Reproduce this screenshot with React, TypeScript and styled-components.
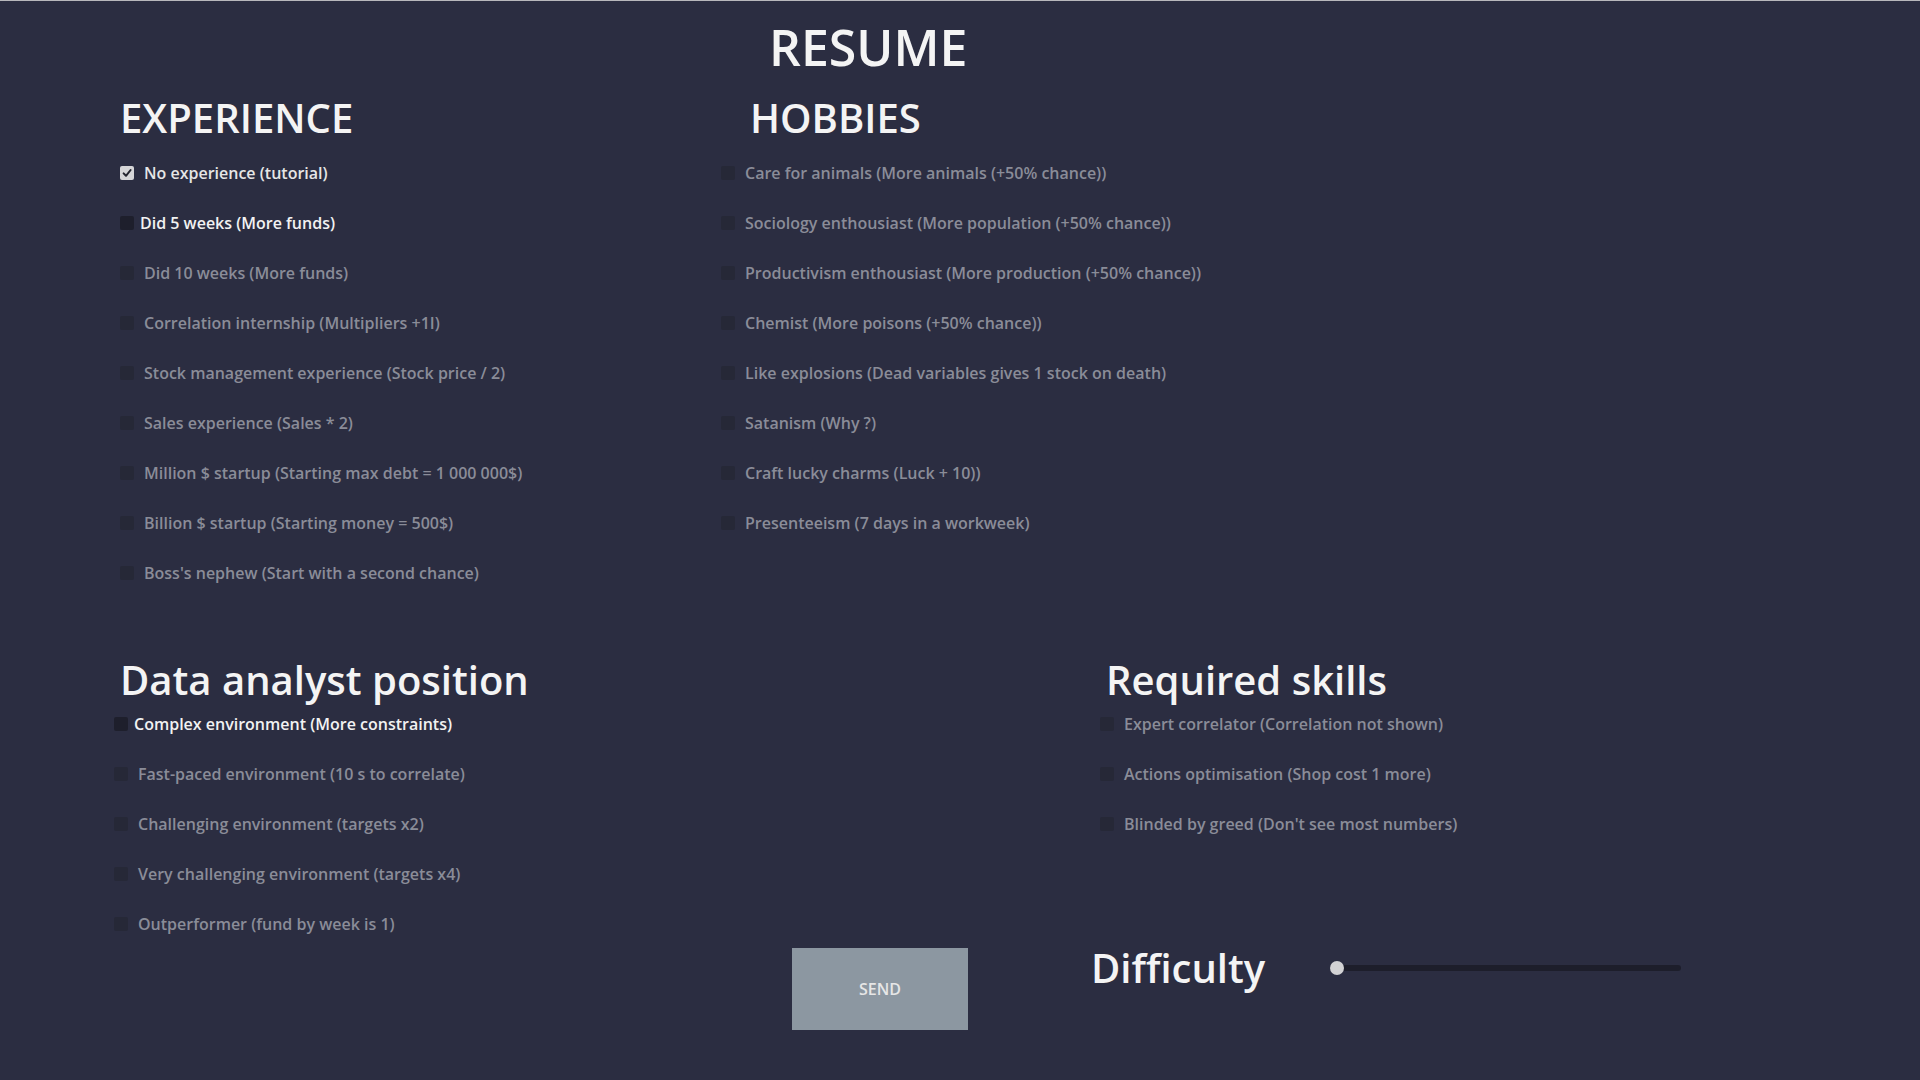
import React from "react";
import styled, { createGlobalStyle } from "styled-components";

type CheckState = "checked" | "hover" | "disabled";

const GlobalStyle = createGlobalStyle`
  html, body {
    margin: 0;
    padding: 0;
    background: #2b2d41;
  }
  * {
    box-sizing: border-box;
  }
`;

const Screen = styled.div`
  width: 1920px;
  height: 1080px;
  overflow: hidden;
  background: #2b2d41;
  border-top: 1px solid #b8b8bc;
  font-family: "Open Sans", "Noto Sans", sans-serif;
  font-weight: 600;
  color: #e0e0e0;
  display: flex;
  flex-direction: column;
`;

const Header = styled.header`
  padding: 12px 0 0 769px;
`;

const Title = styled.h1`
  margin: 0;
  font-size: 50px;
  line-height: 68px;
  font-weight: 600;
  color: #f4f4f4;
`;

const Section = styled.section<{ $left: number; $first: number; $top: number }>`
  display: grid;
  grid-template-columns: ${(p) => p.$first}px 1fr;
  padding-left: ${(p) => p.$left}px;
  margin-top: ${(p) => p.$top}px;
`;

const Column = styled.div`
  display: flex;
  flex-direction: column;
`;

const Heading = styled.h2<{ $indent: number }>`
  margin: 0 0 0 ${(p) => p.$indent}px;
  font-size: 40px;
  line-height: 44px;
  font-weight: 600;
  color: #f4f4f4;
  white-space: nowrap;
`;

const List = styled.div<{ $top: number }>`
  display: flex;
  flex-direction: column;
  gap: 10px;
  margin-top: ${(p) => p.$top}px;
`;

const Row = styled.label<{ $state: CheckState }>`
  display: flex;
  align-items: center;
  height: 40px;
  gap: ${(p) => (p.$state === "hover" ? 6 : 10)}px;
  font-size: 16px;
  white-space: nowrap;
  color: ${(p) =>
    p.$state === "disabled" ? "#8a8c98" : p.$state === "hover" ? "#f2f2f2" : "#e6e6e6"};
`;

const Box = styled.span<{ $state: CheckState }>`
  width: 14px;
  height: 14px;
  flex: none;
  border-radius: 2px;
  display: flex;
  align-items: center;
  justify-content: center;
  background: ${(p) =>
    p.$state === "checked" ? "#d6d6d8" : p.$state === "hover" ? "#1e1f2c" : "#262837"};
`;

const Footer = styled.footer`
  display: flex;
  align-items: flex-start;
  padding-left: 792px;
  margin-top: 2px;
`;

const SendButton = styled.button`
  margin-top: 2px;
  width: 176px;
  height: 82px;
  border: none;
  border-radius: 0;
  background: #8c97a1;
  color: #e6e6e6;
  font-family: inherit;
  font-weight: 600;
  font-size: 16px;
`;

const DifficultyGroup = styled.div`
  display: flex;
  align-items: center;
  height: 44px;
  margin-left: 123px;
`;

const DifficultyLabel = styled.span`
  width: 239px;
  font-size: 40px;
  line-height: 44px;
  color: #f4f4f4;
`;

const Track = styled.div`
  position: relative;
  width: 351px;
  height: 6px;
  border-radius: 3px;
  background: #1d1e2b;
`;

const Grabber = styled.span`
  position: absolute;
  left: 0;
  top: 50%;
  width: 14px;
  height: 14px;
  margin-top: -7px;
  border-radius: 50%;
  background: #d2d2d4;
`;

const CheckMark = () => (
  <svg width="12" height="12" viewBox="0 0 12 12">
    <path
      d="M2.6 6.4 L5 8.8 L9.6 3"
      fill="none"
      stroke="#23242e"
      strokeWidth="2"
      strokeLinecap="round"
      strokeLinejoin="round"
    />
  </svg>
);

type Item = { label: string; state: CheckState };

const CheckRow = ({ label, state }: Item) => (
  <Row $state={state}>
    <Box $state={state}>{state === "checked" && <CheckMark />}</Box>
    {label}
  </Row>
);

const off = (label: string): Item => ({ label, state: "disabled" });

const experience: Item[] = [
  { label: "No experience (tutorial)", state: "checked" },
  { label: "Did 5 weeks (More funds)", state: "hover" },
  off("Did 10 weeks (More funds)"),
  off("Correlation internship (Multipliers +1I)"),
  off("Stock management experience (Stock price / 2)"),
  off("Sales experience (Sales * 2)"),
  off("Million $ startup (Starting max debt = 1 000 000$)"),
  off("Billion $ startup (Starting money = 500$)"),
  off("Boss's nephew (Start with a second chance)"),
];

const hobbies: Item[] = [
  off("Care for animals (More animals (+50% chance))"),
  off("Sociology enthousiast (More population (+50% chance))"),
  off("Productivism enthousiast (More production (+50% chance))"),
  off("Chemist (More poisons (+50% chance))"),
  off("Like explosions (Dead variables gives 1 stock on death)"),
  off("Satanism (Why ?)"),
  off("Craft lucky charms (Luck + 10))"),
  off("Presenteeism (7 days in a workweek)"),
];

const position: Item[] = [
  { label: "Complex environment (More constraints)", state: "hover" },
  off("Fast-paced environment (10 s to correlate)"),
  off("Challenging environment (targets x2)"),
  off("Very challenging environment (targets x4)"),
  off("Outperformer (fund by week is 1)"),
];

const skills: Item[] = [
  off("Expert correlator (Correlation not shown)"),
  off("Actions optimisation (Shop cost 1 more)"),
  off("Blinded by greed (Don't see most numbers)"),
];

const Group = ({
  title,
  indent,
  listTop,
  items,
}: {
  title: string;
  indent: number;
  listTop: number;
  items: Item[];
}) => (
  <Column>
    <Heading $indent={indent}>{title}</Heading>
    <List $top={listTop}>
      {items.map((it) => (
        <CheckRow key={it.label} {...it} />
      ))}
    </List>
  </Column>
);

export default function App() {
  return (
    <>
      <GlobalStyle />
      <Screen>
        <Header>
          <Title>RESUME</Title>
        </Header>
        <Section $left={120} $first={601} $top={15}>
          <Group title="EXPERIENCE" indent={0} listTop={13} items={experience} />
          <Group title="HOBBIES" indent={29} listTop={13} items={hobbies} />
        </Section>
        <Section $left={114} $first={986} $top={65}>
          <Group title="Data analyst position" indent={6} listTop={2} items={position} />
          <Group title="Required skills" indent={6} listTop={2} items={skills} />
        </Section>
        <Footer>
          <SendButton>SEND</SendButton>
          <DifficultyGroup>
            <DifficultyLabel>Difficulty</DifficultyLabel>
            <Track>
              <Grabber />
            </Track>
          </DifficultyGroup>
        </Footer>
      </Screen>
    </>
  );
}
